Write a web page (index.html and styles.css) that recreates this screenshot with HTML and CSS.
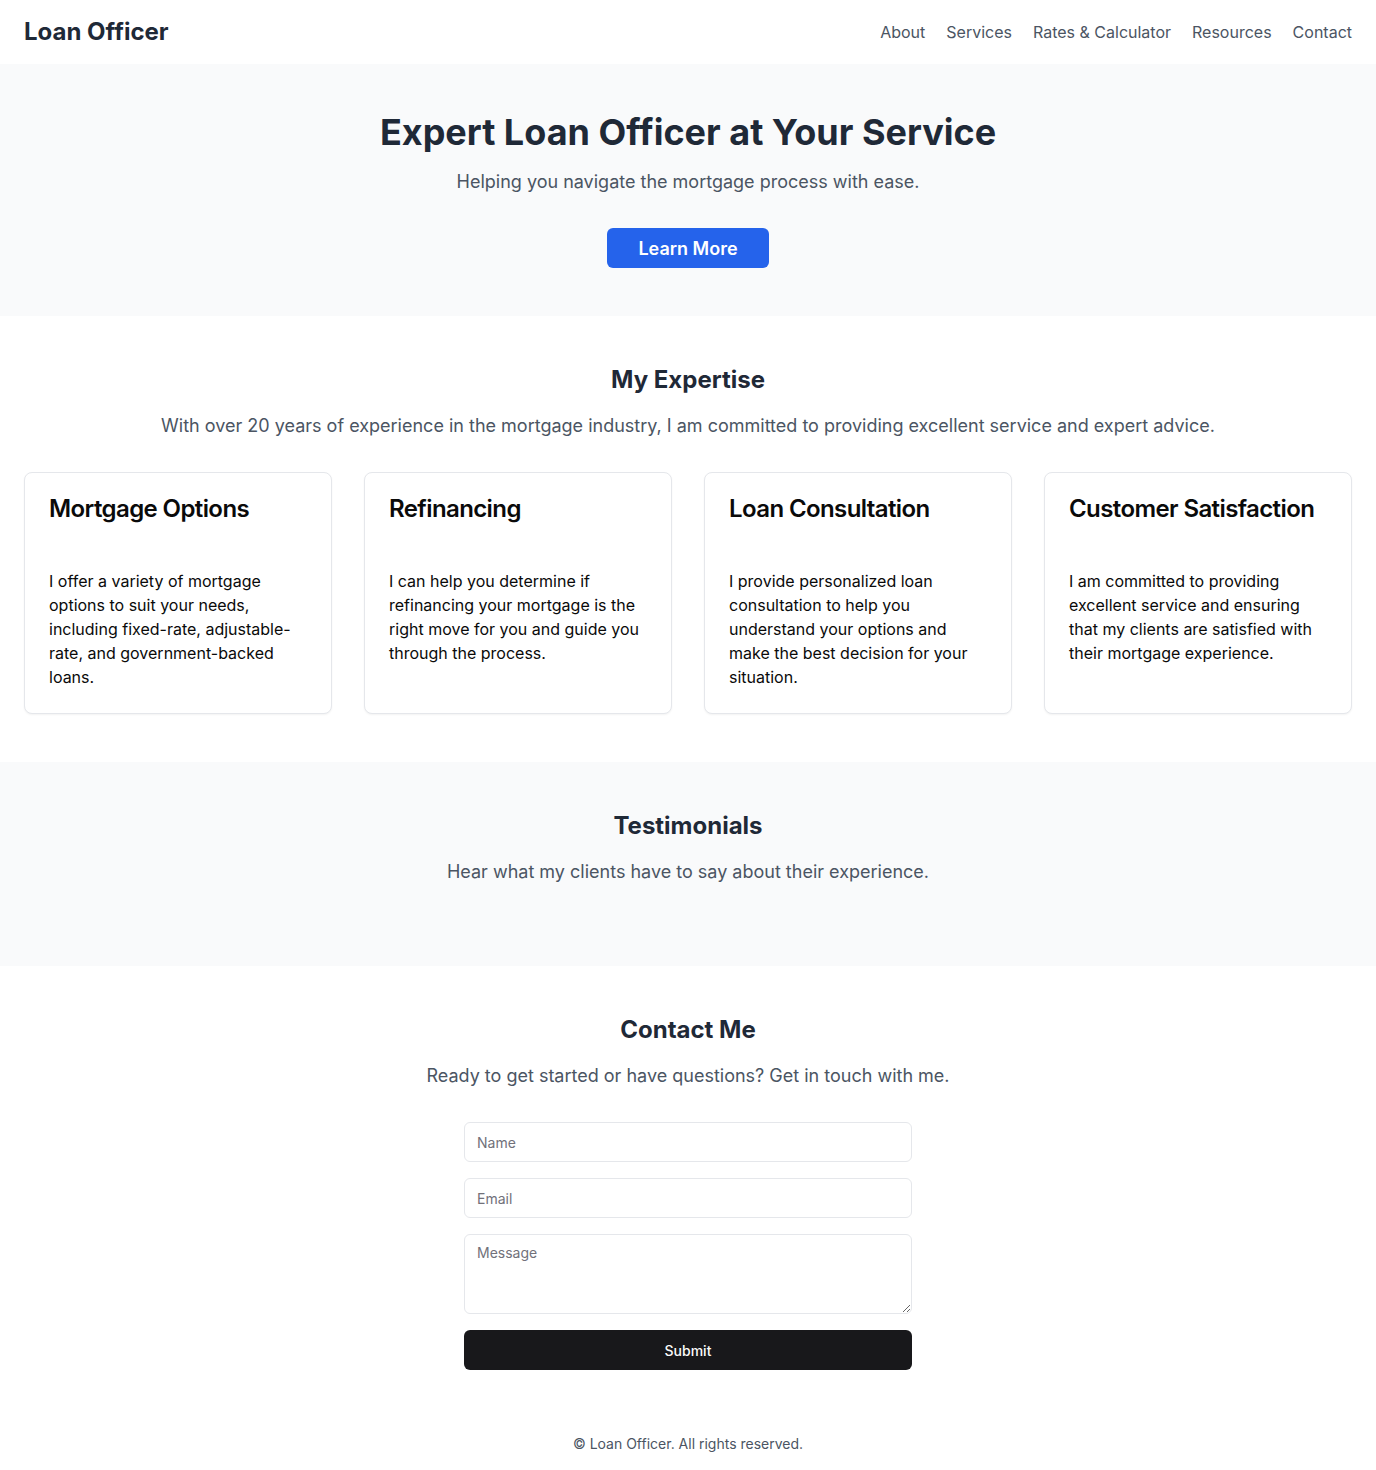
FILE: index.html
```html
<!DOCTYPE html>
<html lang="en">
<head>
<meta charset="utf-8">
<title>Loan Officer</title>
<link rel="stylesheet" href="styles.css">
</head>
<body>
<header class="site-header">
  <div class="logo">Loan Officer</div>
  <nav class="nav">
    <a href="#">About</a>
    <a href="#">Services</a>
    <a href="#">Rates &amp; Calculator</a>
    <a href="#">Resources</a>
    <a href="#">Contact</a>
  </nav>
</header>
<main>
  <section class="hero">
    <h1>Expert Loan Officer at Your Service</h1>
    <p class="lead">Helping you navigate the mortgage process with ease.</p>
    <button class="btn-primary">Learn More</button>
  </section>

  <section class="section">
    <h2>My Expertise</h2>
    <p class="lead">With over 20 years of experience in the mortgage industry, I am committed to providing excellent service and expert advice.</p>
    <div class="cards">
      <div class="card">
        <div class="card-header"><h3>Mortgage Options</h3></div>
        <div class="card-content"><p>I offer a variety of mortgage options to suit your needs, including fixed-rate, adjustable-rate, and government-backed loans.</p></div>
      </div>
      <div class="card">
        <div class="card-header"><h3>Refinancing</h3></div>
        <div class="card-content"><p>I can help you determine if refinancing your mortgage is the right move for you and guide you through the process.</p></div>
      </div>
      <div class="card">
        <div class="card-header"><h3>Loan Consultation</h3></div>
        <div class="card-content"><p>I provide personalized loan consultation to help you understand your options and make the best decision for your situation.</p></div>
      </div>
      <div class="card">
        <div class="card-header"><h3>Customer Satisfaction</h3></div>
        <div class="card-content"><p>I am committed to providing excellent service and ensuring that my clients are satisfied with their mortgage experience.</p></div>
      </div>
    </div>
  </section>

  <section class="section alt">
    <h2>Testimonials</h2>
    <p class="lead">Hear what my clients have to say about their experience.</p>
    <div class="testimonials"></div>
  </section>

  <section class="section">
    <h2>Contact Me</h2>
    <p class="lead">Ready to get started or have questions? Get in touch with me.</p>
    <form class="contact-form">
      <input class="field" type="text" placeholder="Name">
      <input class="field" type="email" placeholder="Email">
      <textarea class="field area" placeholder="Message"></textarea>
      <button type="button" class="btn-dark">Submit</button>
    </form>
  </section>
</main>
<footer class="site-footer">© Loan Officer. All rights reserved.</footer>
</body>
</html>
```

FILE: styles.css
```css
* { box-sizing: border-box; }
html, body { margin: 0; padding: 0; }
body {
  font-family: Inter, "Noto Sans", sans-serif;
  color: #0a0a0a;
  background: #ffffff;
}
.site-header {
  height: 64px;
  display: flex;
  align-items: center;
  justify-content: space-between;
  padding: 0 24px;
  background: #fff;
}
.logo {
  font-size: 24px;
  line-height: 32px;
  font-weight: 700;
  color: #1f2937;
}
.nav { display: flex; gap: 21px; }
.nav a {
  font-size: 16px;
  line-height: 24px;
  color: #4b5563;
  text-decoration: none;
}
.hero {
  background: #f9fafb;
  padding: 48px 24px;
  text-align: center;
}
.hero h1 {
  margin: 0 0 16px;
  font-size: 36px;
  line-height: 40px;
  font-weight: 700;
  color: #1f2937;
}
.lead {
  margin: 0 0 32px;
  font-size: 18px;
  line-height: 28px;
  color: #4b5563;
}
.btn-primary {
  height: 40px;
  padding: 0 31px;
  border: none;
  border-radius: 6px;
  background: #2563eb;
  color: #fff;
  font-family: inherit;
  font-size: 18px;
  font-weight: 600;
  cursor: pointer;
}
.section {
  padding: 48px 24px;
  text-align: center;
}
.section.alt { background: #f9fafb; }
.section h2 {
  margin: 0 0 16px;
  font-size: 24px;
  line-height: 32px;
  font-weight: 700;
  color: #1f2937;
}
.cards {
  display: grid;
  grid-template-columns: repeat(4, 1fr);
  gap: 32px;
  text-align: left;
}
.card {
  border: 1px solid #e5e7eb;
  border-radius: 8px;
  background: #fff;
  box-shadow: 0 1px 2px rgba(0,0,0,0.05);
}
.card-header { padding: 24px; }
.card-header h3 {
  margin: 0;
  font-size: 24px;
  line-height: 24px;
  font-weight: 600;
  letter-spacing: -0.6px;
  color: #0a0a0a;
}
.card-content { padding: 24px; }
.card-content p {
  margin: 0;
  font-size: 16px;
  line-height: 24px;
  color: #0a0a0a;
}
.contact-form {
  max-width: 448px;
  margin: 0 auto;
  display: flex;
  flex-direction: column;
  gap: 16px;
}
.field {
  width: 100%;
  height: 40px;
  padding: 8px 12px;
  border: 1px solid #e5e7eb;
  border-radius: 6px;
  background: #fff;
  font-family: inherit;
  font-size: 14px;
  line-height: 20px;
  color: #0a0a0a;
}
.field::placeholder { color: #71717a; }
.field.area { height: 80px; resize: vertical; display: block; }
.btn-dark {
  height: 40px;
  border: none;
  border-radius: 6px;
  background: #18181b;
  color: #fafafa;
  font-family: inherit;
  font-size: 14px;
  font-weight: 500;
  cursor: pointer;
}
.site-footer {
  padding: 16px 24px;
  text-align: center;
  font-size: 14px;
  line-height: 20px;
  color: #4b5563;
}
```
